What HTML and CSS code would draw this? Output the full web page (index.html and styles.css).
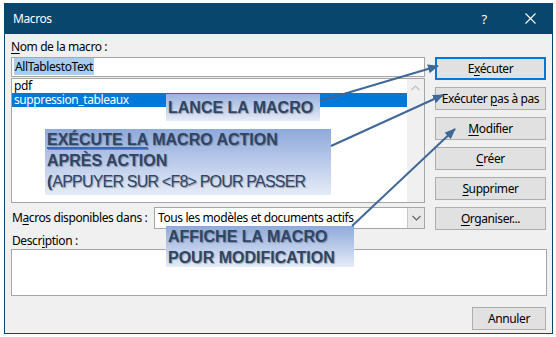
FILE: index.html
```html
<!DOCTYPE html>
<html lang="fr">
<head>
    <meta charset="UTF-8">
    <title>Macros</title>
    <link rel="stylesheet" href="styles.css">
</head>
<body>
    <div class="window">
        <div class="titlebar">
            <span class="title">Macros</span>
            <span class="tb-btn">?</span>
            <span class="tb-btn">
                <svg width="11" height="11" viewBox="0 0 11 11"><path d="M0.5 0.5 L10.5 10.5 M10.5 0.5 L0.5 10.5" stroke="#fff" stroke-width="1.1"/></svg>
            </span>
        </div>

        <div class="content">
            <div class="main">
                <div class="lbl name-lbl"><u>N</u>om de la macro :</div>

                <div class="left-box">
                    <div class="name-input"><span class="sel">AllTablestoText</span></div>
                    <div class="listbox">
                        <ul class="items">
                            <li>pdf</li>
                            <li class="selected">suppression_tableaux</li>
                        </ul>
                        <div class="scrollbar">
                            <svg width="9" height="6" viewBox="0 0 9 6"><path d="M0.5 5 L4.5 1 L8.5 5" fill="none" stroke="#bfbfbf" stroke-width="1.2"/></svg>
                        </div>
                    </div>
                </div>

                <div class="buttons">
                    <button class="btn default">E<u>x</u>écuter</button>
                    <button class="btn">Exécuter <u>p</u>as à pas</button>
                    <button class="btn"><u>M</u>odifier</button>
                    <button class="btn"><u>C</u>réer</button>
                    <button class="btn"><u>S</u>upprimer</button>
                </div>

                <div class="avail">
                    <div class="lbl avail-lbl">M<u>a</u>cros disponibles dans :</div>
                    <div class="combo">
                        <span class="combo-text">Tous les modèles et documents actifs</span>
                        <span class="combo-arrow">
                            <svg width="9" height="6" viewBox="0 0 9 6"><path d="M0.5 1 L4.5 5 L8.5 1" fill="none" stroke="#606060" stroke-width="1.1"/></svg>
                        </span>
                    </div>
                </div>
                <button class="btn organise"><u>O</u>rganiser...</button>
            </div>

            <div class="lbl desc-lbl">Descr<u>i</u>ption :</div>
            <div class="desc"></div>

            <div class="footer">
                <button class="btn cancel">Annuler</button>
            </div>
        </div>
    </div>

    <!-- annotations posées sur la capture -->
    <div class="callout c1">LANCE LA MACRO</div>
    <div class="callout c2">
        <span class="link">EXÉCUTE LA</span> MACRO ACTION<br>
        APRÈS ACTION<br>
        (<span class="thin">APPUYER SUR &lt;F8&gt; POUR PASSER</span>
    </div>
    <div class="callout c3">AFFICHE LA MACRO<br>POUR MODIFICATION</div>

    <svg class="arrows" width="556" height="337" viewBox="0 0 556 337">
        <defs>
            <marker id="head" markerWidth="11" markerHeight="9" refX="10" refY="4.5" orient="auto" markerUnits="userSpaceOnUse">
                <path d="M0 0 L11 4.5 L0 9 z" fill="#3f6797"/>
            </marker>
        </defs>
        <line x1="320" y1="101" x2="438" y2="66" marker-end="url(#head)"/>
        <line x1="331" y1="146" x2="443" y2="95" marker-end="url(#head)"/>
        <line x1="352" y1="226" x2="455" y2="129" marker-end="url(#head)"/>
    </svg>
</body>
</html>
```

FILE: styles.css
```css
* {
    margin: 0;
    padding: 0;
    box-sizing: border-box;
}

body {
    font-family: 'Noto Sans', sans-serif;
    font-size: 12px;
    letter-spacing: -0.4px;
    color: #000;
    background: #fff;
    position: relative;
    width: 556px;
    height: 337px;
    overflow: hidden;
}

/* Fenêtre */
.window {
    margin: 3px 0 0 4px;
    width: 549px;
    height: 331px;
    background: #f0f0f0;
    border: 1px solid #08466e;
    border-top: none;
}

.titlebar {
    height: 31px;
    background: #08466e;
    color: #fff;
    display: flex;
    align-items: center;
    margin: 0 -1px;
}

.title {
    flex: 1;
    padding-left: 9px;
    font-size: 12px;
}

.tb-btn {
    width: 46px;
    height: 31px;
    display: flex;
    align-items: center;
    justify-content: center;
    font-size: 13px;
}

.content {
    padding: 5px 5px 0 6px;
}

.lbl {
    height: 16px;
    line-height: 16px;
}

u {
    text-decoration-thickness: 1px;
    text-underline-offset: 2px;
}

/* Grille principale */
.main {
    display: grid;
    grid-template-columns: 414px 111px;
    column-gap: 10px;
}

.name-lbl {
    grid-column: 1 / 3;
    margin-bottom: 2px;
}

.name-input {
    height: 20px;
    background: #fff;
    border: 1px solid #a6a6a6;
    padding: 1px 2px;
    line-height: 16px;
}

.sel {
    background: #a9cdf1;
    padding: 0 1px;
}

.listbox {
    margin-top: 1px;
    height: 125px;
    background: #fff;
    border: 1px solid #a6a6a6;
    display: flex;
}

.items {
    list-style: none;
    flex: 1;
}

.items li {
    height: 14px;
    line-height: 14px;
    padding-left: 2px;
}

.items li.selected {
    background: #0078d7;
    color: #fff;
}

.scrollbar {
    width: 17px;
    background: #f0f0f0;
    display: flex;
    justify-content: center;
    padding-top: 6px;
}

/* Boutons */
.buttons {
    display: flex;
    flex-direction: column;
    gap: 7px;
}

.btn {
    height: 23px;
    font-family: inherit;
    font-size: 12px;
    letter-spacing: -0.4px;
    color: #000;
    background: #e1e1e1;
    border: 1px solid #adadad;
    white-space: nowrap;
}

.btn.default {
    border: 2px solid #0078d7;
}

.avail {
    display: flex;
    align-items: center;
    margin-top: 4px;
    height: 22px;
}

.avail-lbl {
    width: 143px;
    padding-left: 1px;
}

.combo {
    flex: 1;
    height: 22px;
    background: #fff;
    border: 1px solid #a6a6a6;
    display: flex;
}

.combo-text {
    flex: 1;
    line-height: 19px;
    padding-left: 3px;
}

.combo-arrow {
    width: 17px;
    background: #e8e8e8;
    border-left: 1px solid #c8c8c8;
    display: flex;
    align-items: center;
    justify-content: center;
}

.organise {
    margin-top: 4px;
}

.desc-lbl {
    margin: 3px 0 0 1px;
}

.desc {
    height: 47px;
    width: 536px;
    background: #fff;
    border: 1px solid #a6a6a6;
}

.footer {
    display: flex;
    justify-content: flex-end;
    margin-top: 11px;
    padding-right: 1px;
}

.cancel {
    width: 74px;
}

/* Annotations */
.callout {
    position: absolute;
    font-family: 'Liberation Sans', Arial, sans-serif;
    font-weight: bold;
    font-size: 16px;
    letter-spacing: 0;
    line-height: 21px;
    color: #2f4566;
    text-shadow: 1px 1px 1px rgba(0, 0, 0, 0.3);
    background: linear-gradient(to bottom, #8ea9dc, #e6ecf7);
    padding-left: 2px;
    white-space: nowrap;
}

.c1 {
    left: 166px;
    top: 94px;
    width: 154px;
    height: 27px;
    padding-top: 3px;
    background: linear-gradient(to bottom, #9ab1df, #e6ecf7);
}

.c2 {
    left: 45px;
    top: 129px;
    width: 286px;
    height: 66px;
}

.c3 {
    left: 166px;
    top: 226px;
    width: 188px;
    height: 41px;
}

.link {
    text-decoration: underline;
    text-decoration-color: #3566c4;
    text-decoration-thickness: 2px;
    text-underline-offset: 2px;
}

.thin {
    font-weight: normal;
    letter-spacing: -0.8px;
}

.arrows {
    position: absolute;
    left: 0;
    top: 0;
    pointer-events: none;
}

.arrows line {
    stroke: #3f6797;
    stroke-width: 2;
}
```
